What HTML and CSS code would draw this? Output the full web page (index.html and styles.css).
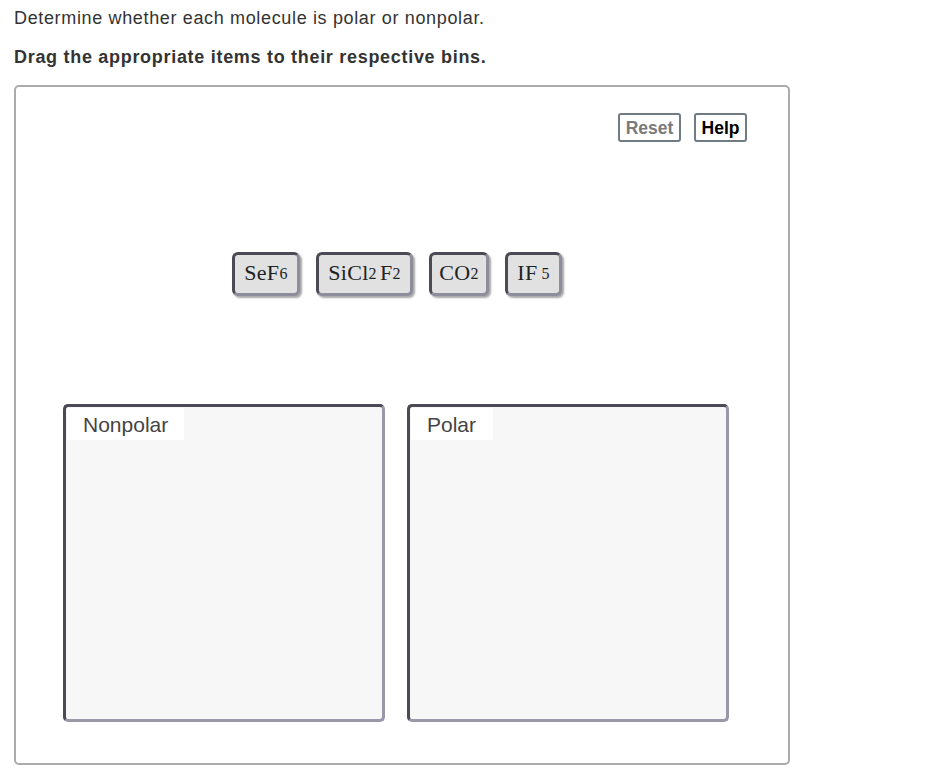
FILE: index.html
```html
<!DOCTYPE html>
<html>
<head>
<meta charset="utf-8">
<link rel="stylesheet" href="styles.css">
</head>
<body>
<p class="prompt">Determine whether each molecule is polar or nonpolar.</p>
<p class="prompt bold">Drag the appropriate items to their respective bins.</p>
<div class="panel">
  <div class="toolbar">
    <button class="btn btn-reset">Reset</button>
    <button class="btn btn-help">Help</button>
  </div>
  <div class="chips">
    <div class="chip chip-1">SeF<span class="sub">6</span></div>
    <div class="chip chip-2">SiCl<span class="sub">2</span><span class="gap"></span>F<span class="sub">2</span></div>
    <div class="chip chip-3">CO<span class="sub">2</span></div>
    <div class="chip chip-4">IF<span class="sub sp">5</span></div>
  </div>
  <div class="bins">
    <div class="bin"><div class="bin-label">Nonpolar</div></div>
    <div class="bin"><div class="bin-label">Polar</div></div>
  </div>
</div>
</body>
</html>
```
FILE: styles.css
```css
* { box-sizing: border-box; }
body {
  margin: 0;
  padding: 7px 14px 0 14px;
  font-family: "Liberation Sans", Arial, Helvetica, sans-serif;
  color: #333;
  background: #fff;
}
.prompt {
  margin: 0;
  font-size: 18px;
  letter-spacing: 0.65px;
  line-height: 22px;
}
.prompt.bold {
  font-weight: bold;
  letter-spacing: 0.7px;
  margin-top: 17px;
}
.panel {
  margin-top: 17px;
  width: 776px;
  height: 680px;
  border: 2px solid #ababab;
  border-radius: 5px;
}
.toolbar {
  display: flex;
  justify-content: flex-end;
  gap: 13px;
  padding: 26px 41px 0 0;
}
.btn {
  height: 29px;
  border: 2px solid #6f7c83;
  border-radius: 3px;
  background: #fff;
  font-family: "Liberation Sans", Arial, sans-serif;
  font-weight: bold;
  font-size: 17.5px;
  padding: 0;
  line-height: 24px;
}
.btn-reset { color: #7a7a7a; width: 63px; }
.btn-help { color: #000; width: 53px; }
.chips {
  display: flex;
  gap: 16px;
  margin-top: 110px;
  padding-left: 216px;
}
.chip {
  height: 44px;
  display: flex;
  align-items: center;
  justify-content: center;
  border: 3px solid;
  border-color: #4b4a55 #8e8d9b #8e8d9b #4b4a55;
  border-radius: 6px;
  background: #e1e1e1;
  box-shadow: 2px 2px 2px rgba(0, 0, 0, 0.35);
  font-family: "Liberation Serif", "Times New Roman", serif;
  font-size: 22px;
  letter-spacing: 0.3px;
  color: #222;
  white-space: nowrap;
  padding-bottom: 2px;
}
.chip-1 { width: 68px; }
.chip-2 { width: 97px; }
.chip-3 { width: 60px; }
.chip-4 { width: 57px; }
.sub {
  font-size: 16px;
  position: relative;
  top: 1px;
}
.gap { display: inline-block; width: 3px; }
.sp { margin-left: 4px; }
.bins {
  display: flex;
  gap: 22px;
  margin-top: 108px;
  padding-left: 47px;
}
.bin {
  width: 322px;
  height: 318px;
  border: 3px solid;
  border-color: #4b4a55 #9a98a8 #9a98a8 #4b4a55;
  border-radius: 5px;
  background: #f7f7f7;
  padding: 1px;
}
.bin-label {
  display: inline-block;
  background: #fff;
  height: 32px;
  padding: 5px 0 0 16px;
  font-size: 21px;
  line-height: 24px;
  color: #444;
}
.bin:first-child .bin-label { width: 117px; }
.bin:last-child .bin-label { width: 82px; }
```
